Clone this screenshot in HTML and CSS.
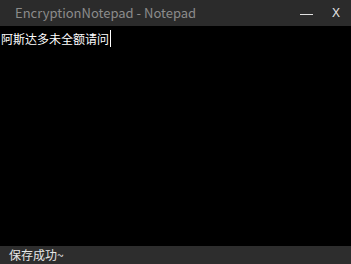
FILE: index.html
```html
<!DOCTYPE html>
<html>
<head>
<meta charset="utf-8">
<link rel="stylesheet" href="styles.css">
</head>
<body>
<div class="window">
  <div class="titlebar">
    <div class="title">EncryptionNotepad - Notepad</div>
    <div class="controls">
      <div class="btn min"><span class="dash"></span></div>
      <div class="btn close">X</div>
    </div>
  </div>
  <div class="editor"><span class="text">阿斯达多未全额请问</span><span class="caret"></span></div>
  <div class="status">保存成功~</div>
</div>
</body>
</html>
```
FILE: styles.css
```css
html, body {
  margin: 0;
  padding: 0;
  width: 351px;
  height: 264px;
  overflow: hidden;
  background: #000;
}
.window {
  display: flex;
  flex-direction: column;
  width: 351px;
  height: 264px;
  font-family: "Noto Sans CJK SC", "Noto Sans", sans-serif;
}
.titlebar {
  height: 26px;
  background: #2b2b2b;
  display: flex;
  align-items: center;
  justify-content: space-between;
  flex-shrink: 0;
}
.title {
  padding-left: 15px;
  font-size: 13px;
  color: #8c8c8c;
  line-height: 26px;
}
.controls {
  display: flex;
  align-items: center;
  height: 26px;
}
.btn {
  display: flex;
  align-items: center;
  justify-content: center;
  height: 26px;
}
.min {
  width: 13px;
  margin-right: 18px;
}
.dash {
  display: block;
  width: 13px;
  height: 1px;
  background: #e0e0e0;
  margin-top: 3px;
}
.close {
  width: 10px;
  margin-right: 10px;
  color: #e6e6e6;
  font-family: "Liberation Sans", sans-serif;
  font-size: 12px;
}
.editor {
  flex: 1;
  background: #000;
  padding: 4px 0 0 1px;
  display: flex;
  align-items: flex-start;
}
.text {
  color: #fff;
  font-size: 12px;
  line-height: 18px;
}
.caret {
  display: block;
  width: 1px;
  height: 17px;
  background: #fff;
  margin-left: 1px;
}
.status {
  height: 18px;
  background: #2d2d2d;
  color: #e6e6e6;
  font-size: 12px;
  line-height: 18px;
  padding-left: 9px;
  flex-shrink: 0;
}
```
